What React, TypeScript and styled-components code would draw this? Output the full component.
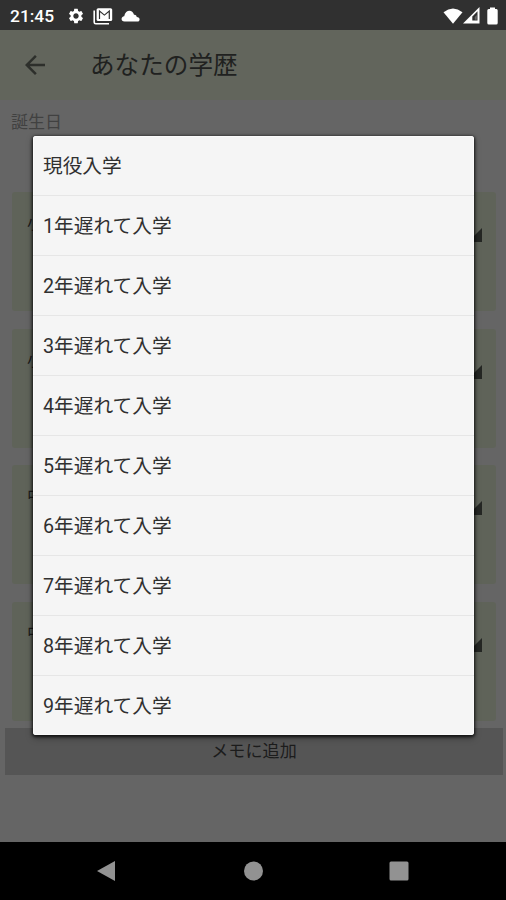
import React from 'react';
import styled, { createGlobalStyle } from 'styled-components';
import { MdArrowBack, MdSettings } from 'react-icons/md';

const GlobalStyle = createGlobalStyle`
  * { box-sizing: border-box; }
  body { margin: 0; background: #000; }
`;

const Screen = styled.div`
  position: relative;
  width: 506px;
  height: 900px;
  display: flex;
  flex-direction: column;
  overflow: hidden;
  background: #656565;
  font-family: Roboto, 'Noto Sans CJK JP', sans-serif;
  color: #1c1c1c;
`;

const StatusBar = styled.header`
  flex: none;
  height: 30px;
  display: flex;
  align-items: center;
  padding: 1px 8px 0 10px;
  background: #303030;
  color: #fff;
`;

const Clock = styled.span`
  width: 57px;
  font-size: 17.4px;
  line-height: 28px;
  font-weight: 500;
`;

const Notifications = styled.div`
  flex: 1;
  display: flex;
  align-items: center;
  gap: 8px;
`;

const Signals = styled.div`
  display: flex;
  align-items: center;
`;

const AppBar = styled.div`
  flex: none;
  height: 70px;
  display: flex;
  align-items: center;
  padding-left: 20px;
  background: #62655c;
  color: #20211f;
`;

const BackIcon = styled(MdArrowBack)`
  width: 30px;
  height: 30px;
  margin-top: -1px;
  color: #2d2f2b;
`;

const Title = styled.h1`
  margin: 2px 0 0 40px;
  font-size: 24.6px;
  line-height: 36px;
  font-weight: 400;
`;

const Content = styled.main`
  flex: 1;
  display: flex;
  flex-direction: column;
`;

const FieldLabel = styled.div`
  height: 92px;
  padding: 9px 0 0 11px;
  font-size: 17px;
  line-height: 26px;
  color: #414141;
`;

const CardList = styled.div`
  display: flex;
  flex-direction: column;
  gap: 17.6px;
  padding: 0 10px 0 12px;
`;

const Card = styled.section`
  height: 119px;
  display: flex;
  justify-content: space-between;
  padding: 18px 14px 0 15px;
  border-radius: 3px;
  background: #5f6359;
  font-size: 17px;
  line-height: 26px;
`;

const SpinnerCorner = styled.svg`
  width: 14px;
  height: 14px;
  margin-top: 18px;
`;

const MemoButton = styled.button`
  height: 47px;
  margin: 7.2px 3px 0 5px;
  padding: 0;
  border: 0;
  background: #555;
  color: #1c1c1c;
  font: inherit;
  font-size: 17.1px;
  line-height: 46px;
`;

const Dialog = styled.ul`
  position: absolute;
  left: 33px;
  top: 136px;
  width: 441px;
  height: 599px;
  margin: 0;
  padding: 0;
  list-style: none;
  border-radius: 3px;
  background: #f5f5f5;
  box-shadow: inset 0 0 0 1px #fbfbfb, 0 1px 3px 1px rgba(0, 0, 0, 0.7), 0 3px 7px rgba(0, 0, 0, 0.35);
`;

const Option = styled.li`
  height: 60px;
  padding: 1px 0 0 10px;
  border-bottom: 1px solid #e6e6e6;
  font-size: 19.7px;
  line-height: 59px;
  color: #303030;

  &:last-child { height: 59px; border-bottom: 0; }
`;

const NavBar = styled.nav`
  flex: none;
  height: 58px;
  display: grid;
  grid-template-columns: repeat(3, 146px);
  justify-content: center;
  justify-items: center;
  align-items: center;
  background: #000;
  color: #929292;
`;

const MailIcon = () => (
  <svg width="20" height="18" viewBox="0 0 20 18">
    <path d="M1.2 3.5V15.2Q1.2 16.8 2.8 16.8H16" fill="none" stroke="#fff" strokeWidth="1.6" />
    <rect x="3.6" y="1.2" width="15.6" height="12.8" rx="1.6" fill="#fff" />
    <path d="M6.5 12V4.1L11.4 8.1L16.3 4.1V12" fill="none" stroke="#303030" strokeWidth="1.2" />
  </svg>
);

const CloudIcon = () => (
  <svg width="19" height="12" viewBox="0 0 19 12">
    <path d="M3.5 11.5C-.5 11.5-.2 6.5 3.2 6.2C4.5-.7 11.5-1 13 4.8C14.8 4.5 15.5 5.6 15.7 7C19.5 7 19.4 11.5 16.4 11.5Z" fill="#fff" />
  </svg>
);

const WifiIcon = () => (
  <svg width="20" height="16" viewBox="0 0 20 16">
    <path d="M0.5 4.2Q10-3.2 19.5 4.2L10 15.8Z" fill="#fff" />
  </svg>
);

const CellIcon = () => (
  <svg width="17" height="17" viewBox="0 0 17 17">
    <path d="M0 16.5L16.5 0V16.5Z" fill="#fff" />
    <path d="M9.3 13.5V9.4L14.5 4.2V13.5Z" fill="#303030" />
    <path d="M11.8 12.8V10L13.8 8V12.8Z" fill="#666" />
  </svg>
);

const BatteryIcon = () => (
  <svg width="11" height="18" viewBox="0 0 11 18">
    <path d="M3 0.5H8V2H9.5Q10.7 2 10.7 3.5V16Q10.7 17.5 9.2 17.5H1.8Q.3 17.5.3 16V3.5Q.3 2 1.7 2H3Z" fill="#fff" />
  </svg>
);

const schools = [
  { id: 1, name: '小' },
  { id: 2, name: '小' },
  { id: 3, name: '中' },
  { id: 4, name: '中' },
];
const options = [
  '現役入学',
  ...Array.from({ length: 9 }, (_, i) => `${i + 1}年遅れて入学`),
];

export default function App() {
  return (
    <Screen lang="ja">
      <GlobalStyle />
      <StatusBar>
        <Clock>21:45</Clock>
        <Notifications>
          <MdSettings size={18} />
          <MailIcon />
          <CloudIcon />
        </Notifications>
        <Signals>
          <WifiIcon />
          <CellIcon />
          <svg width="7" height="1" />
          <BatteryIcon />
        </Signals>
      </StatusBar>
      <AppBar>
        <BackIcon />
        <Title>あなたの学歴</Title>
      </AppBar>
      <Content>
        <FieldLabel>誕生日</FieldLabel>
        <CardList>
          {schools.map(({ id, name }) => (
            <Card key={id}>
              <span>{name}</span>
              <SpinnerCorner viewBox="0 0 14 14">
                <path d="M14 0V14H0Z" fill="#252724" />
              </SpinnerCorner>
            </Card>
          ))}
        </CardList>
        <MemoButton>メモに追加</MemoButton>
      </Content>
      <NavBar>
        <svg width="20" height="22" viewBox="0 0 20 22"><path d="M0 11L18 1V21Z" fill="currentColor" /></svg>
        <svg width="20" height="20" viewBox="0 0 20 20"><circle cx="10.5" cy="10" r="9.5" fill="currentColor" /></svg>
        <svg width="20" height="20" viewBox="0 0 20 20"><rect x=".5" y=".5" width="19" height="19" rx="1.5" fill="currentColor" /></svg>
      </NavBar>
      <Dialog role="listbox">
        {options.map((option) => (
          <Option key={option} role="option">{option}</Option>
        ))}
      </Dialog>
    </Screen>
  );
}
